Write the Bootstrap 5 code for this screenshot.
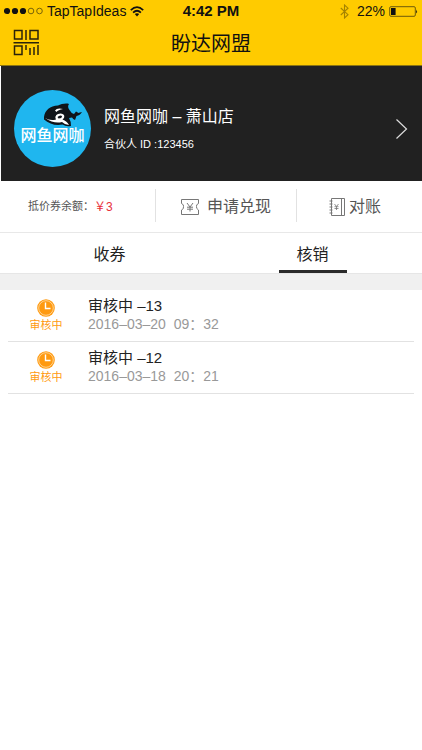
<!DOCTYPE html>
<html lang="zh-CN">
<head>
<meta charset="utf-8">
<meta name="viewport" content="width=device-width, initial-scale=1">
<title>盼达网盟</title>
<link href="https://cdn.jsdelivr.net/npm/bootstrap@5.3.0/dist/css/bootstrap.min.css" rel="stylesheet">
<style>
body { font-family: "Liberation Sans", "Noto Sans CJK SC", sans-serif; color: #222; background: #fff; }
svg { display: block; flex: none; }
.top { background: #ffcb00; border-bottom: 1px solid #8a7412; color: #111; }
.status { display: grid; grid-template-columns: 1fr auto 1fr; height: 22px; padding: 0 4px; font-size: 14px; line-height: 22px; }
.clock { font-size: 15px; font-weight: 700; }
.titlebar { display: grid; grid-template-columns: 1fr auto 1fr; height: 43px; padding: 0 12px; }
.titlebar h1 { font-size: 20px; line-height: 28px; }
.shop { background: #212121; min-height: 115px; margin-left: 1px; padding: 10px 14px 0 13px; color: #fff; text-decoration: none; }
.logo { width: 77px; height: 77px; background: #1fb6ef; }
.logo-name { font-size: 16px; line-height: 16px; font-weight: 500; top: 38px; }
.shop-info { margin-left: 13px; }
.shop-name { font-size: 16px; line-height: 22px; }
.shop-id { font-size: 11px; line-height: 16px; }
.account { display: grid; grid-template-columns: 156fr 141fr 125fr; padding: 8px 0 10px; border-bottom: 1px solid #e8e8e8; color: #555; }
.balance { font-size: 11px; padding-left: 28px; }
.balance span { color: #e8303a; font-size: 12px; }
.plain { background: none; border: 0; padding: 0; color: #555; font-size: 16px; line-height: 24px; }
.account > * { height: 33px; border-right: 1px solid #e2e2e2; padding-top: 2px; }
.account > :last-child { border-right: 0; }
.tabs { border-bottom: 1px solid #e6e6e6; }
.tabs button { height: 40px; color: #222; }
.tabs button span { display: block; width: 68px; height: 40px; line-height: 44px; margin: 0 auto; }
.tabs .active span { border-bottom: 3px solid #2a2a2a; }
.band { height: 16px; background: #f0f0f0; }
.record { height: 52px; border-bottom: 1px solid #e2e2e2; }
.record-state { width: 76px; color: #ff9a10; font-size: 11px; line-height: 16px; }
.record-text { padding-bottom: 2px; }
.record-title { font-size: 15px; line-height: 18px; color: #222; }
.record-time { font-size: 14px; line-height: 18px; color: #999; }
</style>
<script src="https://cdn.jsdelivr.net/npm/bootstrap@5.3.0/dist/js/bootstrap.bundle.min.js"></script>
</head>
<body>
<header class="top">
  <div class="status">
    <div class="d-flex align-items-center gap-1">
      <svg width="39" height="8" viewBox="0 0 39 8"><g fill="#111"><circle cx="3" cy="4" r="3.1"/><circle cx="11" cy="4" r="3.1"/><circle cx="19" cy="4" r="3.1"/></g><g fill="none" stroke="#6b5909" stroke-width=".9"><circle cx="27" cy="4" r="2.8"/><circle cx="35.500" cy="4" r="2.800"/></g></svg>
      <span>TapTapIdeas</span>
      <svg width="14" height="11" viewBox="0 0 14 11" fill="none" stroke="#111" stroke-width="1.700"><path d="M.8 4.200Q7-1.800 13.200 4.200M3.100 6.600Q7 2.900 10.900 6.600"/><path fill="#111" stroke="none" d="M7 10.500 4.800 8.100Q7 6.300 9.200 8.100Z"/></svg>
    </div>
    <span class="clock">4:42 PM</span>
    <div class="d-flex align-items-center justify-content-end">
      <svg class="me-2" width="9" height="15" viewBox="0 0 9 15" fill="none" stroke="#a58300" stroke-width="1.100"><path d="M.8 4 8 10.700 4.500 14V1L8 4.200.8 11"/></svg>
      <span class="me-1">22%</span>
      <svg width="29" height="11" viewBox="0 0 29 11"><rect x=".7" y=".7" width="25.600" height="9.600" rx="1.200" fill="none" stroke="#5e4f0b" stroke-width=".9"/><path d="M2 2h4.600v7H2z" fill="#111"/><path d="M27.200 3.500q1.600 2 0 4z" fill="#111"/></svg>
    </div>
  </div>
  <div class="titlebar">
    <button class="plain text-start" type="button" aria-label="二维码">
      <svg class="mb-1" width="28" height="28" viewBox="0 0 28 28" fill="none" stroke="#2a230b" stroke-width="1.500"><path d="M2.500 2.500h7.500v8.500h-7.500zM18 2.500h8v8.500h-8zM14 2V12M1.500 14.700h25.500M2.500 18h7.500v8.500h-7.500zM14 17v5M18 20v7M22 19v8M26 17v10"/></svg>
    </button>
    <h1 class="mb-0 mt-2 fw-normal">盼达网盟</h1>
  </div>
</header>
<main>
  <a href="#shop" class="shop d-flex align-items-center">
    <div class="logo rounded-circle position-relative flex-shrink-0 overflow-hidden">
      <svg width="77" height="77" viewBox="0 0 77 77"><path fill="#10151a" d="M30 27C31 20 36 16 44 15.500C47 14 52 13 55 14C53.500 16 54 18 55.500 20Q57 23 60 24L62 21.500Q64 22 64 23L68 22Q66 25.500 62.500 26L61 30Q59 29 58 27.500L55 28Q57 31 57 36Q52 37 48.500 34.500C42 36 35 34 30 29.500Z"/><path fill="#fff" d="M31 28Q36 31 42 29.500Q40 26 44 24Q48 22.500 50 25Q51 27.500 48.500 29.500Q53 31 55 35Q51 35 48 32Q40 34 31 28ZM41 20.500Q43 17.500 49 19Q44 20 42.500 22Z"/><path fill="#10151a" d="M43.500 27Q46 24.500 48 26Q48 28.500 44.500 28.500Z"/></svg>
      <span class="logo-name position-absolute start-0 end-0 text-center">网鱼网咖</span>
    </div>
    <div class="shop-info flex-grow-1">
      <div class="shop-name mb-2">网鱼网咖 – 萧山店</div>
      <div class="shop-id">合伙人 ID :123456</div>
    </div>
    <svg width="13" height="22" viewBox="0 0 13 22" fill="none" stroke="#ddd" stroke-width="1.200"><path d="m1.500 1.500 10 9.500-10 9.500"/></svg>
  </a>
  <section class="account">
    <div class="balance d-flex align-items-center">抵价券余额：<span>￥3</span></div>
    <button type="button" class="plain d-flex align-items-center justify-content-center gap-2">
      <svg width="18" height="16" viewBox="0 0 18 16" fill="none" stroke="#777" stroke-width="1"><path d="M.5.5h17v4Q15 5.500 15.500 7.500Q15 9.500 17.500 11v4.500H.5V11Q3 10 2.500 7.500Q3 5.500.5 4.500z"/><path d="m6 4 3 4 3-4M9 8v4.500M6 8.200h6M6 10.200h6"/></svg>
      <span>申请兑现</span>
    </button>
    <button type="button" class="plain d-flex align-items-center ps-4 gap-1">
      <svg class="ms-2" width="16" height="18" viewBox="0 0 16 18" fill="none" stroke="#777" stroke-width="1"><path d="M2.500.5h13v17h-13zM12.500.5v17M.5 3h3M.5 6h3M.5 9h3M.5 12h3M.5 15h3"/><path d="m5.500 6 2 2.500 2-2.500M7.500 8.500V12M5.500 8.700h4M5.500 10.500h4" stroke-width=".8"/></svg>
      <span>对账</span>
    </button>
  </section>
  <nav class="tabs d-flex px-2">
    <button type="button" class="plain flex-fill w-50"><span>收券</span></button>
    <button type="button" class="plain flex-fill w-50 active"><span>核销</span></button>
  </nav>
  <div class="band"></div>
  <ul class="list-unstyled mx-2 mb-0">
    <li class="record d-flex align-items-center">
      <div class="record-state d-flex flex-column align-items-center">
        <svg width="18" height="18" viewBox="0 0 18 18"><circle cx="9" cy="9" r="8.800" fill="#ff9a10"/><circle cx="9" cy="9" r="7.300" fill="none" stroke="#ffe0b0" stroke-width=".8"/><path d="M8.500 3.500v6h5" fill="none" stroke="#fff" stroke-width="1.400"/></svg>
        <span>审核中</span>
      </div>
      <div class="record-text ms-1">
        <div class="record-title">审核中 –13</div>
        <div class="record-time">2016–03–20&nbsp;&nbsp;09：32</div>
      </div>
    </li>
    <li class="record d-flex align-items-center">
      <div class="record-state d-flex flex-column align-items-center">
        <svg width="18" height="18" viewBox="0 0 18 18"><circle cx="9" cy="9" r="8.800" fill="#ff9a10"/><circle cx="9" cy="9" r="7.300" fill="none" stroke="#ffe0b0" stroke-width=".8"/><path d="M8.500 3.500v6h5" fill="none" stroke="#fff" stroke-width="1.400"/></svg>
        <span>审核中</span>
      </div>
      <div class="record-text ms-1">
        <div class="record-title">审核中 –12</div>
        <div class="record-time">2016–03–18&nbsp;&nbsp;20：21</div>
      </div>
    </li>
  </ul>
</main>
</body>
</html>
